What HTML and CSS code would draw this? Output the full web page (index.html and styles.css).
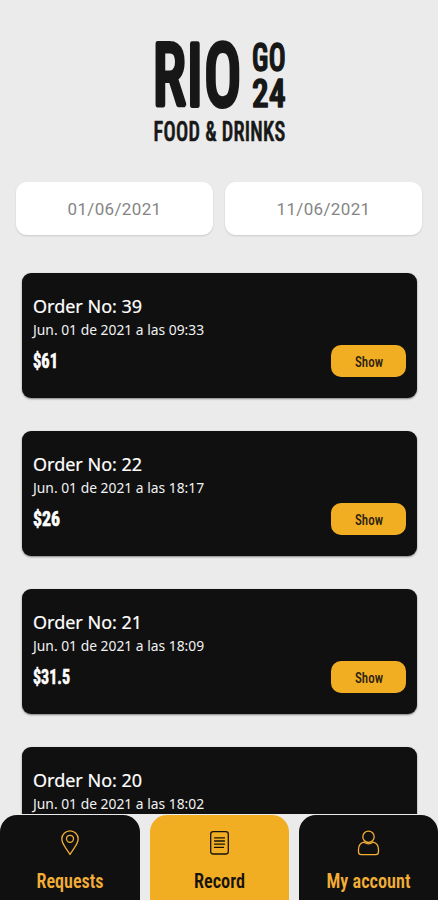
FILE: index.html
```html
<!DOCTYPE html>
<html lang="en">
<head>
<meta charset="utf-8">
<meta name="viewport" content="width=device-width, initial-scale=1">
<title>Rio Go 24 – Record</title>
<link rel="stylesheet" href="styles.css">
</head>
<body>
<div class="app">
  <main class="content">
    <header class="brand">
      <svg class="logo" width="134" height="104" viewBox="0 0 134 104" role="img" aria-label="Rio Go 24 Food &amp; Drinks">
        <text class="logo-main" x="0" y="64" textLength="90" lengthAdjust="spacingAndGlyphs">RIO</text>
        <text class="logo-side" x="99" y="30" textLength="34" lengthAdjust="spacingAndGlyphs">GO</text>
        <text class="logo-side" x="99" y="66" textLength="34" lengthAdjust="spacingAndGlyphs">24</text>
        <text class="logo-tag" x="0.5" y="100" textLength="132" lengthAdjust="spacingAndGlyphs">FOOD &amp; DRINKS</text>
      </svg>
    </header>
    <div class="dates">
      <div class="date">01/06/2021</div>
      <div class="date">11/06/2021</div>
    </div>
    <section class="orders">
      <article class="order">
        <div class="info">
          <h2>Order No: 39</h2>
          <p>Jun. 01 de 2021 a las 09:33</p>
          <svg class="price" width="60" height="22"><text x="0" y="18" textLength="25" lengthAdjust="spacingAndGlyphs">$61</text></svg>
        </div>
        <button class="show"><svg width="28" height="20"><text x="0" y="16" textLength="28" lengthAdjust="spacingAndGlyphs">Show</text></svg></button>
      </article>
      <article class="order">
        <div class="info">
          <h2>Order No: 22</h2>
          <p>Jun. 01 de 2021 a las 18:17</p>
          <svg class="price" width="60" height="22"><text x="0" y="18" textLength="27" lengthAdjust="spacingAndGlyphs">$26</text></svg>
        </div>
        <button class="show"><svg width="28" height="20"><text x="0" y="16" textLength="28" lengthAdjust="spacingAndGlyphs">Show</text></svg></button>
      </article>
      <article class="order">
        <div class="info">
          <h2>Order No: 21</h2>
          <p>Jun. 01 de 2021 a las 18:09</p>
          <svg class="price" width="60" height="22"><text x="0" y="18" textLength="37" lengthAdjust="spacingAndGlyphs">$31.5</text></svg>
        </div>
        <button class="show"><svg width="28" height="20"><text x="0" y="16" textLength="28" lengthAdjust="spacingAndGlyphs">Show</text></svg></button>
      </article>
      <article class="order">
        <div class="info">
          <h2>Order No: 20</h2>
          <p>Jun. 01 de 2021 a las 18:02</p>
        </div>
      </article>
    </section>
  </main>
  <nav class="tabs">
    <a class="tab">
      <svg class="icon" width="24" height="28" viewBox="0 0 24 28"><path d="M12 25.5C9.5 20.5 3.8 15.4 3.8 10A8.2 8.2 0 0 1 20.2 10C20.2 15.4 14.5 20.5 12 25.5Z"/><circle cx="12" cy="9.8" r="3.5"/></svg>
      <svg class="label" width="68" height="28"><text x="0.5" y="20" textLength="67" lengthAdjust="spacingAndGlyphs">Requests</text></svg>
    </a>
    <a class="tab active">
      <svg class="icon" width="24" height="28" viewBox="0 0 24 28"><rect x="2.7" y="2.7" width="17.6" height="22.3" rx="2.5"/><path d="M6.5 8.8H16.5M6.5 12H16.5M6.5 15.2H16.5M6.5 18.4H15.5"/></svg>
      <svg class="label" width="52" height="28"><text x="0" y="20" textLength="51" lengthAdjust="spacingAndGlyphs">Record</text></svg>
    </a>
    <a class="tab">
      <svg class="icon" width="24" height="28" viewBox="0 0 24 28"><circle cx="11.5" cy="7.8" r="5.7"/><path d="M7 13.2C3.5 14 1.5 16.8 1.5 20.5V22.5Q1.5 25.7 4.2 25.7H18.8Q21.5 25.7 21.5 22.5V20.5C21.5 16.8 19.5 14 16 13.2Q11.5 16.5 7 13.2Z"/></svg>
      <svg class="label" width="85" height="28"><text x="0.5" y="20" textLength="84" lengthAdjust="spacingAndGlyphs">My account</text></svg>
    </a>
  </nav>
</div>
</body>
</html>
```
FILE: styles.css
```css
* { box-sizing: border-box; }
body { margin: 0; background: #ebebeb; }
.app { width: 438px; height: 900px; overflow: hidden; display: flex; flex-direction: column; background: #ebebeb; }
.content { height: 814px; flex: none; overflow: hidden; }
svg { display: block; overflow: visible; }
svg text { font-family: Roboto, "Liberation Sans", sans-serif; font-stretch: 75%; }

.brand { height: 182px; padding: 41px 0 0 153px; }
.logo text { fill: #171717; stroke: #171717; stroke-linejoin: round; font-weight: 500; }
.logo .logo-main { font-size: 85px; stroke-width: 6px; letter-spacing: 3px; font-weight: 400; }
.logo .logo-side { font-size: 38px; stroke-width: 1.6px; letter-spacing: .5px; }
.logo .logo-tag { font-size: 28px; stroke-width: .7px; letter-spacing: .4px; }

.dates { display: grid; grid-template-columns: 1fr 1fr; gap: 12px; padding: 0 16px; height: 91px; align-items: start; }
.date { height: 53px; border-radius: 11px; background: #fff; box-shadow: 0 1px 2px rgba(0,0,0,.14); display: flex; align-items: center; justify-content: center; padding-top: 1px; font: 400 17px/20px Roboto, sans-serif; letter-spacing: .35px; color: #858585; }

.orders { display: flex; flex-direction: column; gap: 33px; padding: 0 21px 0 22px; }
.order { height: 125px; flex: none; border-radius: 9px; background: #101010; box-shadow: 0 1px 2px rgba(0,0,0,.45); color: #fff; padding: 21px 11px; display: flex; justify-content: space-between; align-items: flex-end; }
.info { align-self: flex-start; font-family: "Noto Sans", "Open Sans", sans-serif; }
.info h2 { margin: 0; font-size: 18px; line-height: 24px; font-weight: 400; -webkit-text-stroke: .2px #fff; }
.info p { margin: 0; font-size: 13.85px; line-height: 23px; color: #f2f2f2; }
.price { margin-top: 9px; }
.price text { fill: #fff; stroke: #fff; stroke-width: .6px; font-size: 20px; font-weight: 700; }
.show { width: 75px; height: 32px; border: 0; border-radius: 10px; padding: 0 0 0 1px; background: #f2ae23; display: flex; align-items: center; justify-content: center; }
.show text { font-size: 15.5px; font-weight: 500; fill: #2c210d; }

.tabs { display: grid; grid-template-columns: 140px 139px 139px; gap: 10px; height: 86px; padding-top: 1px; }
.tab { background: #101010; color: #f2ae36; border-radius: 17px 17px 0 0; display: flex; flex-direction: column; align-items: center; padding-top: 14px; }
.tab.active { background: #f2ae23; color: #17130c; }
.icon { fill: none; stroke: currentColor; stroke-width: 1.3; stroke-linecap: round; stroke-linejoin: round; }
.label { margin-top: 11px; }
.label text { fill: currentColor; font-size: 20px; font-weight: 600; }
```
